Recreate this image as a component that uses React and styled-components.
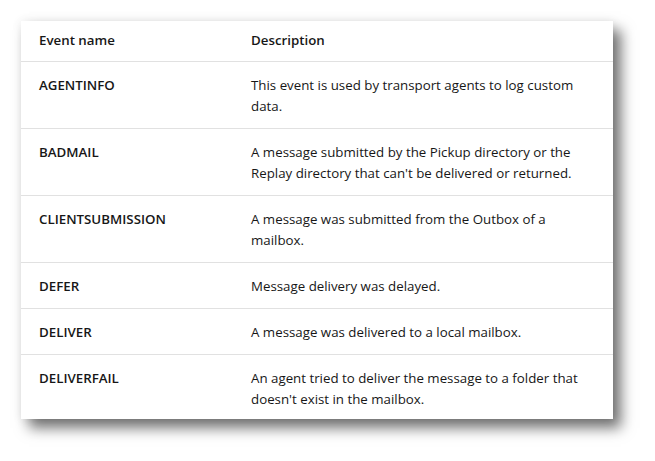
import React from "react";
import styled, { createGlobalStyle } from "styled-components";

const Global = createGlobalStyle`
  body {
    margin: 0;
    background: #fff;
    font-family: "Open Sans", "Noto Sans", sans-serif;
  }
`;

const Page = styled.div`
  padding: 21px 42px 43px 21px;
`;

const Card = styled.div`
  width: 592px;
  background: #fff;
  box-shadow: 8px 9px 13px rgba(0, 0, 0, 0.55), 0 0 10px rgba(0, 0, 0, 0.08);
`;

const Table = styled.table`
  width: 100%;
  table-layout: fixed;
  border-collapse: collapse;
  color: #171717;
  font-size: 13.3px;
  line-height: 21px;
`;

const Col = styled.col`
  width: ${(p) => p.w || "auto"};
`;

const Head = styled.th`
  text-align: left;
  font-weight: 600;
  padding: 9px 18px 10px 18px;
  border-bottom: 1px solid #e1e1e1;
`;

const Row = styled.tr`
  border-bottom: 1px solid #e1e1e1;
  &:last-child {
    border-bottom: none;
  }
  &:last-child td {
    padding-bottom: 9px;
  }
`;

const Name = styled.td`
  vertical-align: top;
  font-weight: 600;
  padding: 13px 18px 11px;
`;

const Desc = styled.td`
  vertical-align: top;
  padding: 13px 18px 11px;
`;

const events = [
  ["AGENTINFO", "This event is used by transport agents to log custom data."],
  [
    "BADMAIL",
    "A message submitted by the Pickup directory or the Replay directory that can't be delivered or returned.",
  ],
  ["CLIENTSUBMISSION", "A message was submitted from the Outbox of a mailbox."],
  ["DEFER", "Message delivery was delayed."],
  ["DELIVER", "A message was delivered to a local mailbox."],
  [
    "DELIVERFAIL",
    "An agent tried to deliver the message to a folder that doesn't exist in the mailbox.",
  ],
];

export default function App() {
  return (
    <Page>
      <Global />
      <Card>
        <Table>
          <colgroup>
            <Col w="212px" />
            <Col />
          </colgroup>
          <thead>
            <tr>
              <Head>Event name</Head>
              <Head>Description</Head>
            </tr>
          </thead>
          <tbody>
            {events.map(([name, desc]) => (
              <Row key={name}>
                <Name>{name}</Name>
                <Desc>{desc}</Desc>
              </Row>
            ))}
          </tbody>
        </Table>
      </Card>
    </Page>
  );
}
